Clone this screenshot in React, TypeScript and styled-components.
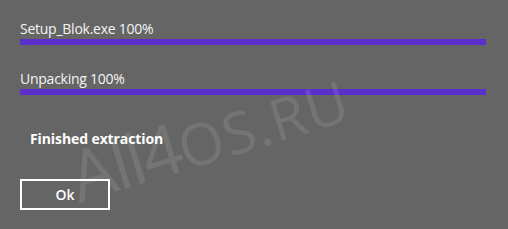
import React from "react";
import styled, { createGlobalStyle } from "styled-components";

const Global = createGlobalStyle`
  html, body {
    margin: 0;
    padding: 0;
    background: #656565;
  }
  body {
    font-family: "Open Sans", "Noto Sans", sans-serif;
    color: #ffffff;
  }
`;

const Wrapper = styled.div`
  position: relative;
  width: 508px;
  height: 229px;
  overflow: hidden;
  background: #656565;
  box-sizing: border-box;
  padding: 19px 22px 0 20px;
  display: flex;
  flex-direction: column;
  align-items: stretch;
`;

const Task = styled.div<{ gap: number }>`
  display: flex;
  flex-direction: column;
  margin-bottom: ${(p) => p.gap}px;
`;

const Label = styled.div`
  font-size: 14px;
  line-height: 20px;
  letter-spacing: -0.25px;
  color: #f4f4f4;
`;

const Bar = styled.div`
  height: 6px;
  background: #5b2fcb;
`;

const Message = styled.div`
  font-size: 14px;
  font-weight: 700;
  line-height: 20px;
  letter-spacing: -0.1px;
  margin: 34px 0 0 10px;
`;

const Button = styled.button`
  align-self: flex-start;
  margin-top: 30px;
  width: 90px;
  height: 31px;
  box-sizing: border-box;
  border: 2px solid #ffffff;
  background: transparent;
  color: #ffffff;
  font-family: "Open Sans", "Noto Sans", sans-serif;
  font-size: 14px;
  font-weight: 600;
  padding: 0;
`;

/* watermark stamped over the dialog */
const Watermark = styled.div`
  position: absolute;
  left: 79px;
  top: 141px;
  height: 70px;
  line-height: 70px;
  font-family: "Open Sans", "Noto Sans", sans-serif;
  font-weight: 400;
  font-size: 70px;
  letter-spacing: -2px;
  color: rgba(255, 255, 255, 0.1);
  transform: rotate(-17deg);
  transform-origin: 0 62px;
  white-space: nowrap;
  pointer-events: none;
`;

const Small = styled.span`
  font-size: 58px;
  letter-spacing: 1px;
`;

export default function App() {
  return (
    <>
      <Global />
      <Wrapper>
        <Task gap={24}>
          <Label>Setup_Blok.exe 100%</Label>
          <Bar />
        </Task>
        <Task gap={0}>
          <Label>Unpacking 100%</Label>
          <Bar />
        </Task>
        <Message>Finished extraction</Message>
        <Button>Ok</Button>
        <Watermark>
          All4<Small>OS.RU</Small>
        </Watermark>
      </Wrapper>
    </>
  );
}
